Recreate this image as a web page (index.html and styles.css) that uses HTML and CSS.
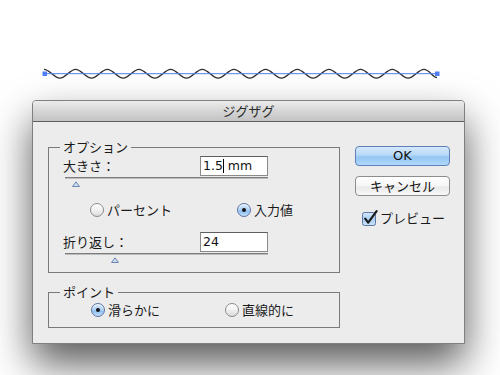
FILE: index.html
```html
<!DOCTYPE html>
<html lang="ja">
<head>
<meta charset="utf-8">
<title>ジグザグ</title>
<link rel="stylesheet" href="styles.css">
</head>
<body>
<div class="canvas">
  <svg class="wave" width="500" height="100" viewBox="0 0 500 100">
    <path d="M44,69.4 c5.7,0 10.13,8.8 15.83,8.8 s10.13,-8.8 15.83,-8.8 s10.13,8.8 15.83,8.8 s10.13,-8.8 15.83,-8.8 s10.13,8.8 15.83,8.8 s10.13,-8.8 15.83,-8.8 s10.13,8.8 15.83,8.8 s10.13,-8.8 15.83,-8.8 s10.13,8.8 15.83,8.8 s10.13,-8.8 15.83,-8.8 s10.13,8.8 15.83,8.8 s10.13,-8.8 15.83,-8.8 s10.13,8.8 15.83,8.8 s10.13,-8.8 15.83,-8.8 s10.13,8.8 15.83,8.8 s10.13,-8.8 15.83,-8.8 s10.13,8.8 15.83,8.8 s10.13,-8.8 15.83,-8.8 s10.13,8.8 15.83,8.8 s10.13,-8.8 15.83,-8.8 s10.13,8.8 15.83,8.8 s10.13,-8.8 15.83,-8.8 s10.13,8.8 15.83,8.8 s10.13,-8.8 15.83,-8.8 s8.4,8.2 13.1,8.2" fill="none" stroke="#2e2e2e" stroke-width="1.3"/>
    <line x1="44" y1="73.7" x2="437" y2="73.7" stroke="#4d7ff2" stroke-width="1"/>
    <rect x="42.5" y="71.5" width="4.5" height="4.5" fill="#4d7ff2"/>
    <rect x="435" y="71.5" width="4.5" height="4.5" fill="#4d7ff2"/>
  </svg>
</div>

<div class="dialog">
  <div class="titlebar">ジグザグ</div>
  <div class="content">
    <div class="left">
      <fieldset class="group g1">
        <legend>オプション</legend>
        <div class="row">
          <span class="lbl">大きさ：</span>
          <div class="input">1.5<span class="caret"></span> mm</div>
        </div>
        <div class="slider"></div>
        <svg class="thumb t1" width="8" height="6" viewBox="0 0 8 6"><polygon points="0.5,5.5 4,0.8 7.5,5.5" fill="#cfdff3" stroke="#6b86b3" stroke-width="1"/></svg>
        <div class="radios r1">
          <div class="radio"><span class="rb"></span>パーセント</div>
          <div class="radio"><span class="rb on"></span>入力値</div>
        </div>
        <div class="row row2">
          <span class="lbl">折り返し：</span>
          <div class="input">24</div>
        </div>
        <div class="slider"></div>
        <svg class="thumb t2" width="8" height="6" viewBox="0 0 8 6"><polygon points="0.5,5.5 4,0.8 7.5,5.5" fill="#cfdff3" stroke="#6b86b3" stroke-width="1"/></svg>
      </fieldset>
      <fieldset class="group g2">
        <legend>ポイント</legend>
        <div class="radios r2">
          <div class="radio"><span class="rb on"></span>滑らかに</div>
          <div class="radio"><span class="rb"></span>直線的に</div>
        </div>
      </fieldset>
    </div>
    <div class="right">
      <div class="btn ok">OK</div>
      <div class="btn cancel">キャンセル</div>
      <div class="check">
        <svg class="cb" width="17" height="16" viewBox="0 0 17 16">
          <defs>
            <linearGradient id="cbg" x1="0" y1="0" x2="0" y2="1">
              <stop offset="0" stop-color="#d6e8fb"/>
              <stop offset="0.5" stop-color="#a9cff5"/>
              <stop offset="1" stop-color="#c9e2fb"/>
            </linearGradient>
          </defs>
          <rect x="0.5" y="2.5" width="13" height="13" rx="2" fill="url(#cbg)" stroke="#5d76a3"/>
          <path d="M3.2,8.6 L6.2,12.6 L14.6,1.2" fill="none" stroke="#1c1c1c" stroke-width="2.2" stroke-linecap="round" stroke-linejoin="round"/>
        </svg>
        <span>プレビュー</span>
      </div>
    </div>
  </div>
</div>
</body>
</html>
```

FILE: styles.css
```css
html, body {
  margin: 0;
  padding: 0;
  background: #ffffff;
}

body {
  width: 500px;
  height: 375px;
  overflow: hidden;
  font-family: "Noto Sans CJK JP", "DejaVu Sans", sans-serif;
  font-size: 13px;
  color: #1a1a1a;
}

.canvas {
  height: 100px;
}

.wave {
  display: block;
}

.dialog {
  margin-left: 32px;
  width: 433px;
  box-sizing: border-box;
  border: 1px solid #7f7f7f;
  border-radius: 4px 4px 0 0;
  background: #ececec;
  box-shadow: 0 20px 40px rgba(0, 0, 0, 0.65);
}

.titlebar {
  height: 20px;
  line-height: 20px;
  text-align: center;
  font-size: 13px;
  color: #2b2b2b;
  background: linear-gradient(#ececec, #d6d6d6 50%, #c3c3c3);
  border-bottom: 1px solid #5f5f5f;
  border-radius: 3px 3px 0 0;
}

.content {
  display: flex;
  padding: 17px 14px 15px 15px;
  gap: 15px;
}

.left {
  width: 292px;
}

.group {
  margin: 0;
  border: 1px solid #7a7a7a;
  padding: 0 71px 9px 14px;
  min-width: 0;
}

.group legend {
  padding: 0 3px;
  margin-left: -3px;
  height: 16px;
  line-height: 16px;
  font-size: 13px;
  color: #1a1a1a;
}

.g1 {
  padding-top: 1px;
}

.g2 {
  margin-top: 11px;
  padding-top: 2px;
}

.row {
  display: flex;
  align-items: center;
  justify-content: space-between;
  height: 20px;
}

.row2 {
  margin-top: 14px;
}

.lbl {
  line-height: 16px;
}

.input {
  width: 68px;
  height: 20px;
  box-sizing: border-box;
  border: 1px solid #8a8a8a;
  border-top-color: #5e5e5e;
  background: #ffffff;
  padding-left: 2px;
  font-family: "DejaVu Sans", sans-serif;
  font-size: 12.5px;
  line-height: 18px;
  color: #111;
  white-space: pre;
}

.caret {
  display: inline-block;
  width: 1px;
  height: 14px;
  background: #000;
  vertical-align: -3px;
}

.slider {
  margin-top: 1px;
  margin-left: 2px;
  height: 0;
  border-top: 1px solid #7d7d7d;
  border-bottom: 1px solid #bdbdbd;
}

.thumb {
  display: block;
  margin-top: 2px;
}

.t1 {
  margin-left: 9px;
}

.t2 {
  margin-left: 48px;
}

.radios {
  display: flex;
  height: 16px;
  align-items: center;
}

.r1 {
  margin-top: 15px;
  padding-left: 27px;
}

.r1 .radio:first-child {
  width: 147px;
}

.r2 {
  padding-left: 28px;
}

.r2 .radio:first-child {
  width: 134px;
}

.radio {
  flex: none;
  display: flex;
  align-items: center;
  gap: 3px;
  line-height: 16px;
  white-space: nowrap;
}

.rb {
  flex: none;
  display: flex;
  align-items: center;
  justify-content: center;
  width: 14px;
  height: 14px;
  box-sizing: border-box;
  border-radius: 50%;
  border: 1px solid #8a8a8a;
  background: linear-gradient(#ffffff, #f1f1f1 50%, #dadada);
  box-shadow: inset 0 1px 1px rgba(255, 255, 255, 0.9);
}

.rb.on {
  border-color: #5a72a0;
  background: linear-gradient(#d9eafc, #a9cff5 50%, #8ec0f2 60%, #c4e0fb);
}

.rb.on::after {
  content: "";
  width: 4px;
  height: 4px;
  border-radius: 50%;
  background: #141414;
}

.right {
  width: 95px;
  padding-top: 7px;
}

.btn {
  height: 20px;
  box-sizing: border-box;
  border-radius: 4px;
  text-align: center;
  line-height: 18px;
  font-size: 13px;
  color: #111;
}

.ok {
  border: 1px solid #5f80b6;
  background: linear-gradient(#d5e9fc, #b6d8f8 45%, #94c5f4 55%, #b0d8fb);
  font-family: "DejaVu Sans", sans-serif;
}

.cancel {
  margin-top: 10px;
  border: 1px solid #8d8d8d;
  background: linear-gradient(#ffffff, #f6f6f6 50%, #e9e9e9 55%, #f8f8f8);
}

.check {
  margin-top: 14px;
  margin-left: 7px;
  display: flex;
  align-items: flex-end;
  gap: 1px;
  height: 16px;
  line-height: 16px;
}

.cb {
  display: block;
  flex: none;
}
```
